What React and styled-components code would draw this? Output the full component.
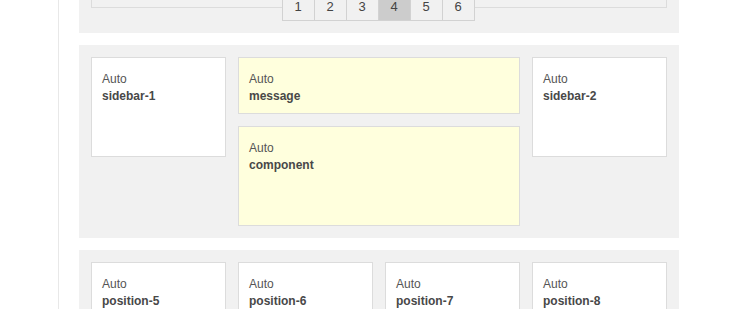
import React from 'react';
import styled, { createGlobalStyle } from 'styled-components';

const GlobalStyle = createGlobalStyle`
  html, body {
    margin: 0;
    background: #fff;
    font-family: 'Liberation Sans', Arial, sans-serif;
    font-size: 12px;
    color: #555;
  }
`;

const Page = styled.div`
  margin-left: 58px;
  margin-top: -40px;
  padding-left: 20px;
  border-left: 1px solid #e8e8e8;
  min-height: 360px;
  display: flex;
  flex-direction: column;
  gap: 12px;
`;

const Panel = styled.section`
  width: 600px;
  box-sizing: border-box;
  padding: 12px;
  background: #f1f1f1;
`;

const Frame = styled.div`
  height: 34px;
  border: 1px solid #dcdcdc;
`;

const Pager = styled.div`
  display: flex;
  justify-content: center;
  margin-top: -17px;
  padding-right: 2px;
`;

const PageButton = styled.span`
  width: 33px;
  height: 30px;
  box-sizing: border-box;
  display: flex;
  align-items: center;
  justify-content: center;
  border: 1px solid #d2d2d2;
  background: ${p => (p.$active ? '#cccccc' : '#f1f1f1')};
  color: #444;
  font-size: 13px;

  & + & {
    margin-left: -1px;
  }
`;

const Grid = styled.div`
  display: grid;
  grid-template-columns: repeat(4, 135px);
  gap: 12px;
`;

const Stack = styled.div`
  grid-column: span 2;
  display: flex;
  flex-direction: column;
  gap: 12px;
`;

const Box = styled.div`
  box-sizing: border-box;
  height: ${p => p.$h || 100}px;
  padding: 13px 10px 9px;
  border: 1px solid #dcdcdc;
  background: ${p => (p.$hl ? '#ffffdd' : '#fff')};
  line-height: 17px;
`;

const Kind = styled.div`
  color: #555;
`;

const Name = styled.div`
  font-weight: bold;
  color: #484848;
`;

const Module = ({ name, h, hl }) => (
  <Box $h={h} $hl={hl}>
    <Kind>Auto</Kind>
    <Name>{name}</Name>
  </Box>
);

export default function App() {
  return (
    <>
      <GlobalStyle />
      <Page>
        <Panel>
          <Frame />
          <Pager>
            {[1, 2, 3, 4, 5, 6].map(n => (
              <PageButton key={n} $active={n === 4}>
                {n}
              </PageButton>
            ))}
          </Pager>
        </Panel>
        <Panel>
          <Grid>
            <Module name='sidebar-1' />
            <Stack>
              <Module name='message' h={57} hl />
              <Module name='component' hl />
            </Stack>
            <Module name='sidebar-2' />
          </Grid>
        </Panel>
        <Panel>
          <Grid>
            <Module name='position-5' />
            <Module name='position-6' />
            <Module name='position-7' />
            <Module name='position-8' />
          </Grid>
        </Panel>
      </Page>
    </>
  );
}
